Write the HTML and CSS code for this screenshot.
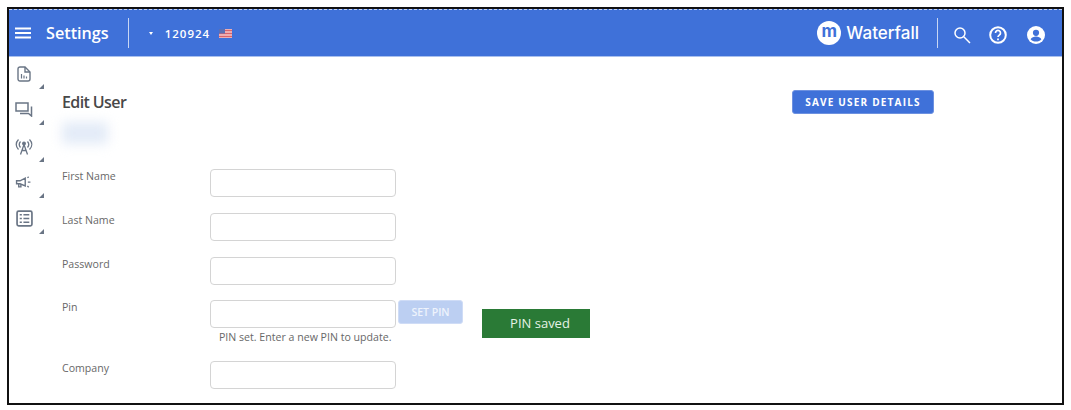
FILE: index.html
```html
<!DOCTYPE html>
<html lang="en">
<head>
<meta charset="UTF-8" />
<title>Edit User</title>
<link rel="stylesheet" href="styles.css">
</head>
<body>
<div class="frame">
  <header class="topbar">
    <svg class="menu-icon" width="16" height="12" viewBox="0 0 16 12"><path d="M0 1.500h16M0 6h16M0 10.500h16" stroke="#fff" stroke-width="2"/></svg>
    <span class="page-title">Settings</span>
    <span class="bar-divider"></span>
    <span class="acct-caret"></span>
    <span class="acct-num">120924</span>
    <svg class="flag" width="13" height="9" viewBox="0 0 13 9"><rect width="13" height="9" fill="#f3c6c8"/><path d="M0 1.500h13M0 4.500h13M0 7.500h13" stroke="#d9626a" stroke-width="1.300"/><rect width="6" height="4.500" fill="#5a6fb5"/></svg>
    <span class="logo">
      <span class="logo-mark">m</span>
      <span class="logo-text">Waterfall</span>
    </span>
    <span class="bar-divider right"></span>
    <svg class="bar-icon search" width="18" height="18" viewBox="0 0 18 18" fill="none" stroke="#fff" stroke-width="1.500"><circle cx="7" cy="7" r="5"/><path d="M10.800 10.800 17 17"/></svg>
    <svg class="bar-icon help" width="18" height="18" viewBox="0 0 18 18" fill="none" stroke="#fff" stroke-width="2"><circle cx="9" cy="9" r="7.800"/><path d="M6.500 7a2.500 2.500 0 1 1 3.800 2.100c-.9.600-1.300 1-1.300 2" stroke-width="1.700"/><path d="M9 12.500v1.700" stroke-width="1.800"/></svg>
    <svg class="bar-icon user" width="18" height="18" viewBox="0 0 18 18"><circle cx="9" cy="9" r="9" fill="#fff"/><circle cx="9" cy="6.800" r="3.100" fill="#3f71d9"/><path d="M3.600 13.200c1-2 3.200-2.800 5.400-2.800s4.400.8 5.400 2.800c-1.200 1.500-3.200 2.400-5.400 2.400s-4.200-.9-5.400-2.400z" fill="#3f71d9"/></svg>
  </header>

  <div class="page">
    <nav class="sidebar">
      <div class="side-item doc">
        <svg width="14" height="16" viewBox="0 0 14 16" fill="none" stroke="#6a7585" stroke-width="1.400"><path d="M1 3a2 2 0 0 1 2-2h5l5 5v7a2 2 0 0 1-2 2H3a2 2 0 0 1-2-2z"/><path d="M8 1v5h5"/><path d="M4.500 12.500V8M7 12.500V9.500M9.500 12.500v-2" stroke-width="1.200"/></svg>
      </div>
      <div class="side-item chat">
        <svg width="18" height="15" viewBox="0 0 18 15" fill="none" stroke="#6a7585" stroke-width="1.500"><path d="M1 1h12v8H1z"/><path d="M16.500 4.500v9.500l-3-2.500H5"/></svg>
      </div>
      <div class="side-item tower">
        <svg width="18" height="17" viewBox="0 0 18 17" fill="none" stroke="#6a7585" stroke-width="1.300"><path d="M3.500 1.500c-3 3-3 7 0 10M14.500 1.500c3 3 3 7 0 10M5.500 3.500c-1.700 2-1.700 4 0 6M12.500 3.500c1.700 2 1.700 4 0 6"/><circle cx="9" cy="5.500" r="1.300" fill="#6a7585"/><path d="M9 6.500 5.500 16.500M9 6.500l3.500 10M6.800 12.500h4.400"/></svg>
      </div>
      <div class="side-item horn">
        <svg width="17" height="13" viewBox="0 0 18 15" fill="none" stroke="#6a7585" stroke-width="1.600"><path d="M1 5.500h4l6-3v9l-6-2.500H1z"/><path d="M3.500 9v3.500h2.500V9.500"/><path d="M13.500 2 15 1M14 7h3M13.500 11.500l1.500 1.500" stroke-width="1.500"/></svg>
      </div>
      <div class="side-item list">
        <svg width="17" height="17" viewBox="0 0 16 16" fill="none" stroke="#6a7585"><rect x="1" y="1" width="14" height="14" rx="1.500" stroke-width="1.600"/><path d="M3.500 4.500h2M7 4.500h5.500M3.500 8h2M7 8h5.500M3.500 11.500h2M7 11.500h5.500" stroke-width="1.500"/></svg>
      </div>
    </nav>

    <main class="content">
      <div class="content-head">
        <h1 class="edit-title">Edit User</h1>
        <button class="btn-save">SAVE USER DETAILS</button>
      </div>
      <div class="blurred-name"></div>

      <form class="user-form">
        <div class="form-row">
          <label>First Name</label>
          <input type="text" />
        </div>
        <div class="form-row">
          <label>Last Name</label>
          <input type="text" />
        </div>
        <div class="form-row">
          <label>Password</label>
          <input type="text" />
        </div>
        <div class="form-row pin-row">
          <label>Pin</label>
          <div class="pin-col">
            <input type="text" />
            <p class="pin-hint">PIN set. Enter a new PIN to update.</p>
          </div>
          <button type="button" class="btn-pin">SET PIN</button>
          <div class="pin-saved">PIN saved</div>
        </div>
        <div class="form-row">
          <label>Company</label>
          <input type="text" />
        </div>
      </form>
    </main>
  </div>
</div>
</body>
</html>
```

FILE: styles.css
```css
* {
  box-sizing: border-box;
}
html, body {
  height: 100%;
}
body {
  margin: 0;
  padding: 7px 7px 5px 7px;
  background: #fff;
  font-family: "Open Sans", Arial, sans-serif;
  color: #686868;
}
.frame {
  height: 398px;
  border: 2px solid #111;
  overflow: hidden;
}
.topbar {
  height: 48px;
  background: #3f71d9;
  border-top: 1px dashed #c4d3f3;
  border-bottom: 1px solid #a9c0ee;
  display: flex;
  align-items: center;
  padding-left: 6px;
  color: #fff;
}
.menu-icon {
  margin-right: 15px;
}
.page-title {
  font-size: 16.200px;
  font-weight: 600;
}
.bar-divider {
  width: 1px;
  height: 30px;
  background: #c8d6f4;
  margin-left: 19px;
}
.acct-caret {
  width: 0;
  height: 0;
  border-left: 2.500px solid transparent;
  border-right: 2.500px solid transparent;
  border-top: 3px solid #fff;
  margin-left: 20px;
  margin-right: 12px;
}
.acct-num {
  font-size: 11.500px;
  font-weight: 600;
  letter-spacing: 1px;
  margin-right: 9px;
}
.logo {
  margin-left: auto;
  display: flex;
  align-items: center;
}
.logo-mark {
  width: 24px;
  height: 24px;
  border-radius: 50%;
  background: #fff;
  color: #3f71d9;
  font-family: "Inter", sans-serif;
  font-size: 17px;
  font-weight: 700;
  line-height: 21px;
  text-align: center;
  margin-right: 5px;
}
.logo-text {
  font-family: "Inter", sans-serif;
  font-size: 17px;
  font-weight: 500;
}
.bar-divider.right {
  margin-left: 18px;
  margin-right: 15px;
}
.bar-icon {
  margin-top: 3px;
  margin-right: 20px;
}
.bar-icon.search {
  margin-right: 18px;
}
.bar-icon.user {
  margin-right: 17px;
}
.page {
  display: flex;
}
.sidebar {
  width: 40px;
  padding-top: 7px;
  flex-shrink: 0;
}
.side-item {
  height: 36.300px;
  position: relative;
  padding-left: 6px;
}
.side-item svg {
  display: block;
}
.side-item.doc {
  padding: 2px 0 0 8px;
}
.side-item.chat {
  padding-top: 2px;
}
.side-item.tower {
  padding-top: 1px;
}
.side-item.horn {
  padding-top: 3px;
}
.side-item.list {
  padding: 1px 0 0 7px;
}
/* little corner marker under each icon */
.side-item::after {
  content: "";
  position: absolute;
  left: 30px;
  top: 20px;
  border-left: 5px solid transparent;
  border-bottom: 5px solid #6a7585;
}
.content {
  flex: 1;
  padding: 33px 0 0 13px;
}
.content-head {
  display: flex;
  justify-content: space-between;
  align-items: flex-start;
  width: 872px;
}
.edit-title {
  margin: 1px 0 0 0;
  font-size: 16px;
  font-weight: 600;
  line-height: 22px;
  letter-spacing: -0.6px;
  color: #484848;
}
.btn-save {
  height: 24px;
  width: 142px;
  padding: 0;
  border: 1px solid #6d91e0;
  border-radius: 3px;
  background: #3f71d9;
  color: #fff;
  font-family: inherit;
  font-size: 10px;
  font-weight: 700;
  letter-spacing: 1.200px;
}
.blurred-name {
  width: 46px;
  height: 22px;
  margin: 8px 0 0 0;
  background: #e3ebf7;
  filter: blur(6px);
}
.user-form {
  margin-top: 25px;
}
.form-row {
  display: flex;
  align-items: flex-start;
  height: 44px;
}
.form-row label {
  width: 148px;
  flex-shrink: 0;
  font-size: 10.600px;
  line-height: 15px;
}
.form-row input {
  width: 186px;
  height: 28px;
  border: 1px solid #d4d4d4;
  border-radius: 4px;
  background: #fff;
  display: block;
  flex-shrink: 0;
}
.pin-row {
  height: 61px;
  margin-top: -1px;
}
.pin-hint {
  margin: 2px 0 0 9px;
  font-size: 10.600px;
  line-height: 14px;
  white-space: nowrap;
}
.btn-pin {
  width: 65px;
  height: 24px;
  margin-left: 2px;
  padding: 0;
  border: 1px solid #cfdcf6;
  border-radius: 3px;
  background: #bccff2;
  color: #eef3fc;
  font-family: inherit;
  font-size: 10.500px;
  font-weight: 600;
}
.pin-saved {
  width: 108px;
  height: 29px;
  margin: 9px 0 0 19px;
  padding-left: 8px;
  background: #2a7a36;
  color: #e6f2e6;
  font-size: 13px;
  line-height: 29px;
  text-align: center;
}
```
